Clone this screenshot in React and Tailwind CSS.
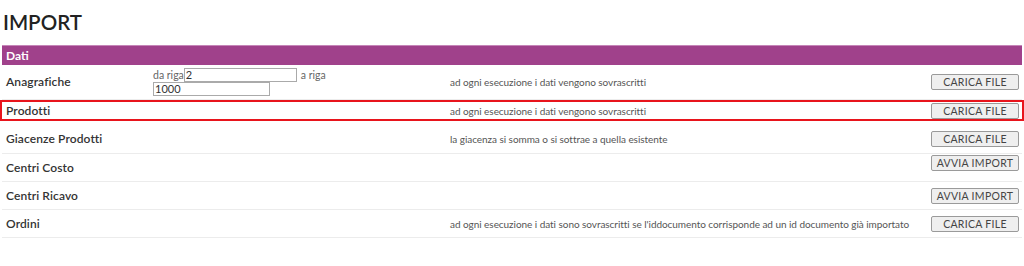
import React from "react";

const font = { fontFamily: "Lato, 'Open Sans', sans-serif" };

function Btn({ children }) {
  return (
    <button className="w-[88px] h-[16px] border border-[#9a9a9a] rounded-[2px] bg-[#efefef] text-[10.5px] leading-[14px] text-[#444] tracking-[0.3px] font-['Lato',sans-serif]">
      {children}
    </button>
  );
}

function Row({ label, desc, btn, className = "", btnAlign = "self-center", children }) {
  return (
    <div className={`flex items-center border-b border-[#ececec] ${className}`}>
      <div className="w-[147px] pl-[4px] text-[12px] leading-[16px] font-semibold text-[#333] tracking-[0.1px]">{label}</div>
      <div className="w-[297px]">{children}</div>
      <div className="flex-1 pl-[4px] text-[10px] leading-[14px] text-[#555] tracking-[-0.05px] whitespace-nowrap">{desc}</div>
      <div className={`w-[91px] flex ${btnAlign}`}>{btn && <Btn>{btn}</Btn>}</div>
    </div>
  );
}

export default function App() {
  return (
    <div className="w-[1024px] h-[266px] bg-white overflow-hidden" style={font}>
      <div className="h-[45px] pl-[3px] pt-[9px]">
        <h1 className="text-[20.5px] leading-[26px] font-semibold text-[#222]">IMPORT</h1>
      </div>
      <div className="mx-[2px]">
        <div className="h-[20px] bg-[#a0418b] border-t border-[#c586b8] flex items-center pl-[4px] text-[12px] font-bold text-white">
          Dati
        </div>
        <Row label="Anagrafiche" desc="ad ogni esecuzione i dati vengono sovrascritti" btn="CARICA FILE" className="h-[35px]">
          <div className="w-[190px] pl-[4px] text-[10.5px] text-[#666] leading-[14px]">
            <div className="flex items-center">
              <span>da riga</span>
              <input defaultValue="2" className="w-[113px] h-[14px] border border-[#aaa] px-[1px] text-[11px] text-[#333] outline-none" />
              <span className="ml-[4px]">a riga</span>
            </div>
            <input defaultValue="1000" className="block w-[117px] h-[14px] border border-[#aaa] px-[1px] text-[11px] text-[#333] outline-none" />
          </div>
        </Row>
        <div className="-mx-[2px] border-2 border-[#e8141c]">
          <Row label="Prodotti" desc="ad ogni esecuzione i dati vengono sovrascritti" btn="CARICA FILE" className="h-[17px] border-b-0" />
        </div>
        <Row label="Giacenze Prodotti" desc="la giacenza si somma o si sottrae a quella esistente" btn="CARICA FILE" className="h-[33px] pt-[3px]" />
        <Row label="Centri Costo" desc="" btn="AVVIA IMPORT" className="h-[28px]" btnAlign="self-start pt-[1px]" />
        <Row label="Centri Ricavo" desc="" btn="AVVIA IMPORT" className="h-[28px]" />
        <Row label="Ordini" desc="ad ogni esecuzione i dati sono sovrascritti se l'iddocumento corrisponde ad un id documento già importato" btn="CARICA FILE" className="h-[28px]" />
      </div>
    </div>
  );
}
